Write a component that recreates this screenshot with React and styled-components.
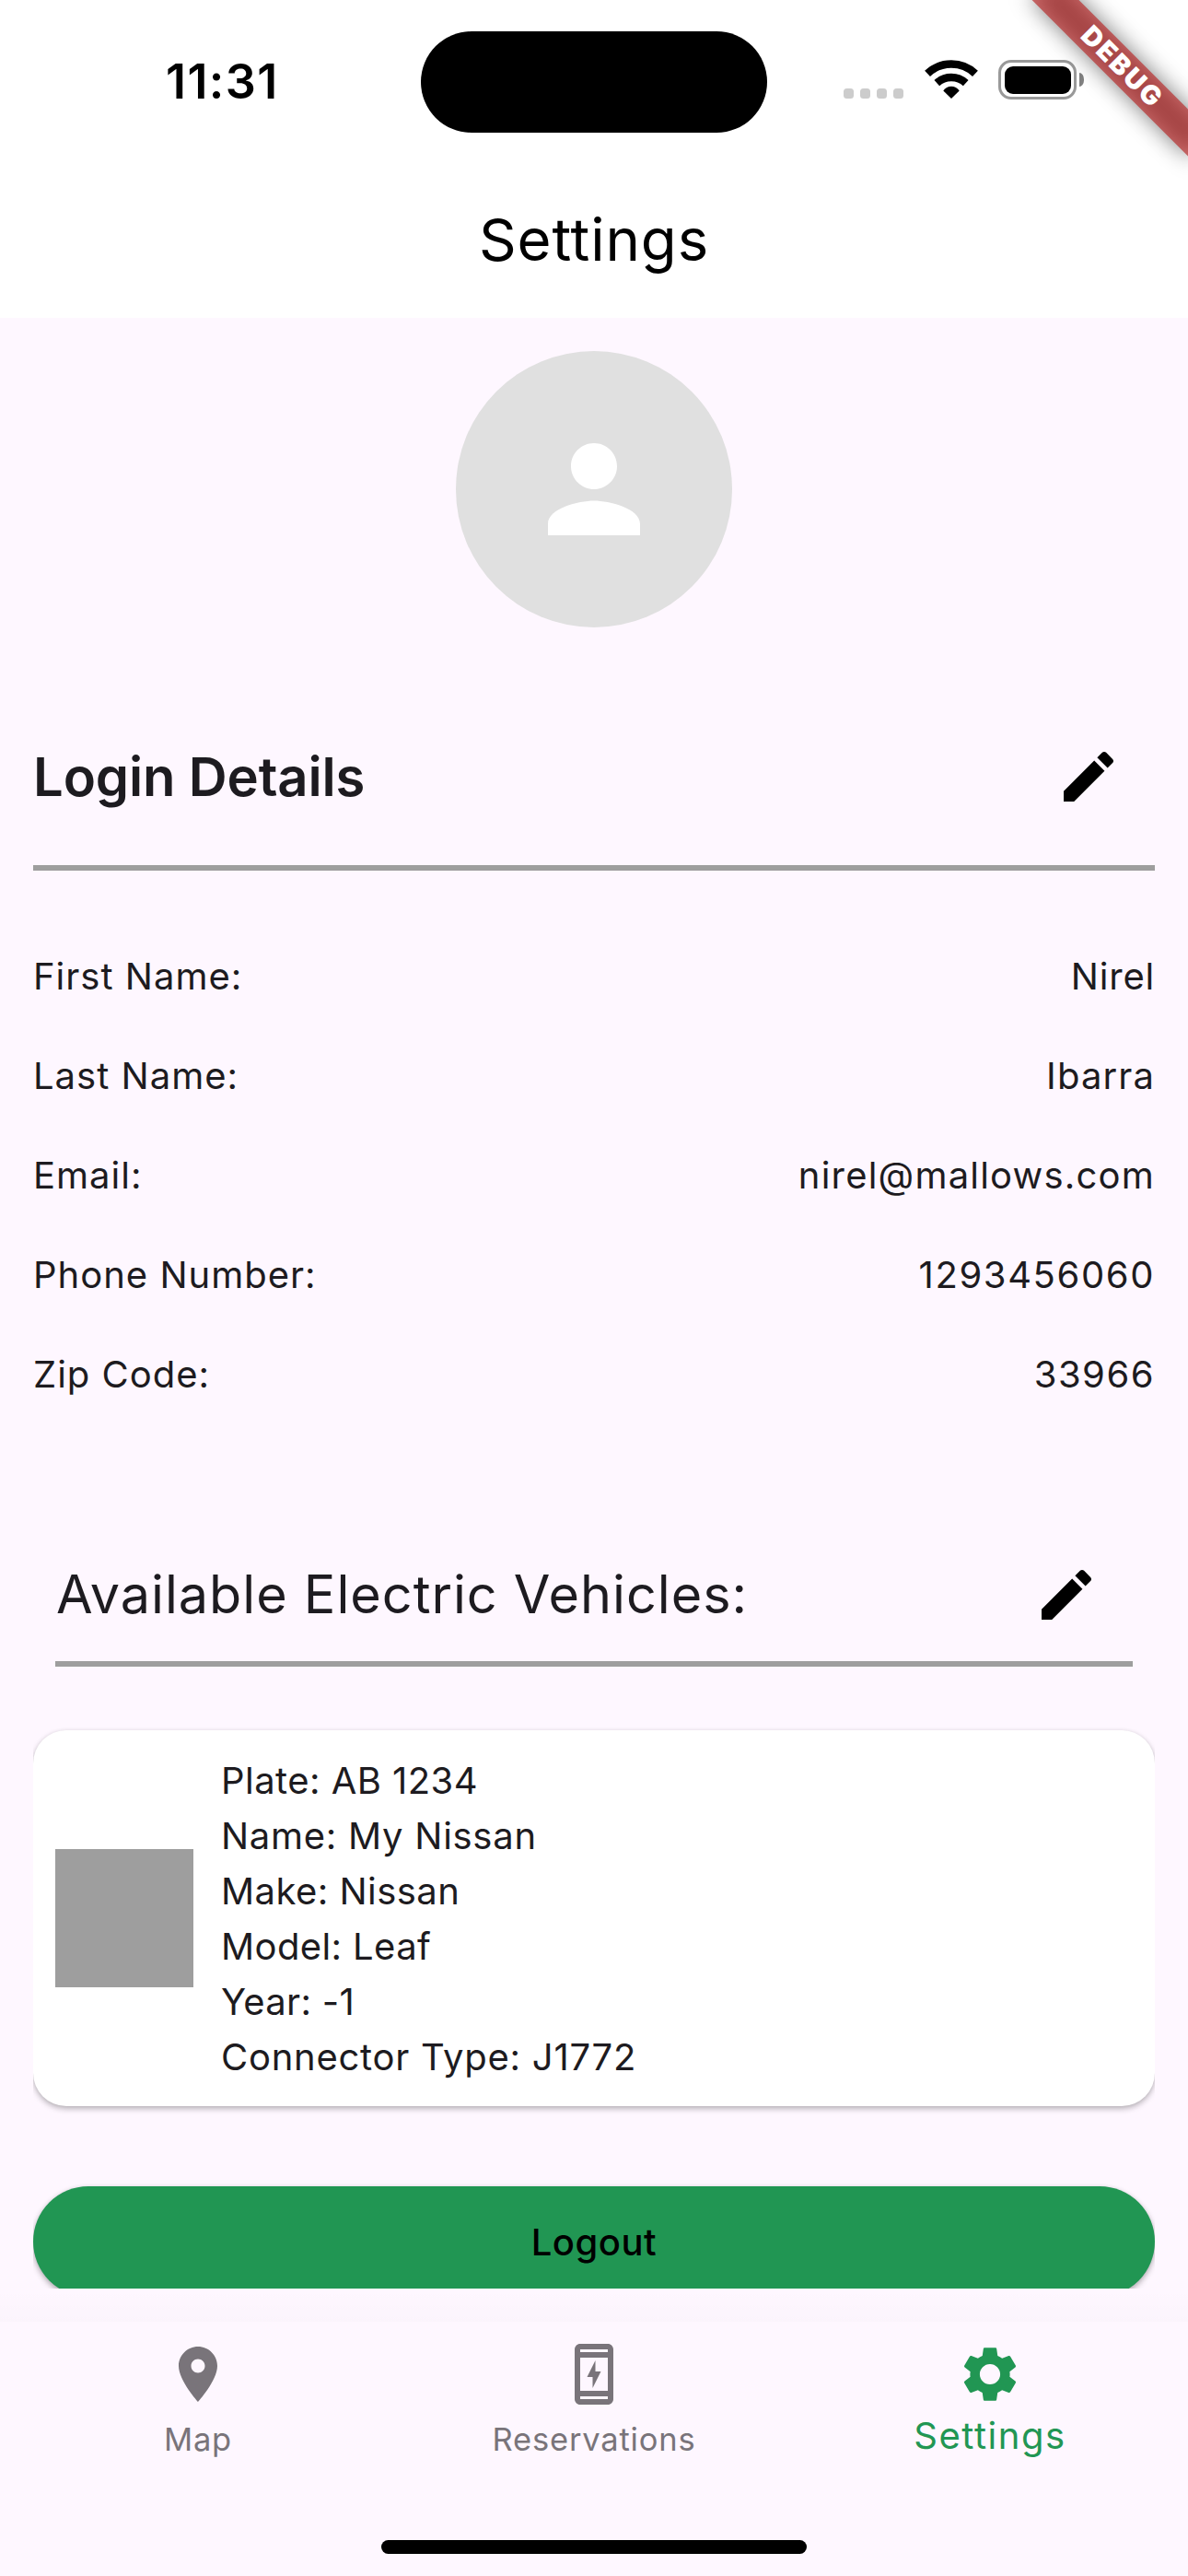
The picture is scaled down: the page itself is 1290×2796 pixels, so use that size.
import React from "react";
import styled, { createGlobalStyle } from "styled-components";

const GlobalStyle = createGlobalStyle`
  *, *::before, *::after { box-sizing: border-box; }
  html, body { margin: 0; padding: 0; overflow: hidden; }
  body {
    font-family: Inter, "Open Sans", sans-serif;
    color: #1d1b20;
    background: #fef7ff;
  }
`;

const Screen = styled.div`
  position: relative;
  display: flex;
  flex-direction: column;
  width: 1290px;
  height: 2796px;
  overflow: hidden;
  background: #fef7ff;
`;

/* ---------- status bar ---------- */

const StatusBar = styled.header`
  display: grid;
  grid-template-columns: 457px 376px 457px;
  height: 177px;
  flex: none;
  background: #fff;
  color: #000;
`;

const Clock = styled.div`
  padding-left: 180px;
  font-size: 52px;
  font-weight: 600;
  line-height: 177px;
  letter-spacing: 1.4px;
`;

const Island = styled.div`
  height: 110px;
  margin-top: 34px;
  border-radius: 55px;
  background: #000;
`;

const StatusIcons = styled.div`
  display: flex;
  justify-content: flex-end;
  height: 43px;
  margin-top: 65px;
  padding-right: 113px;
`;

const SignalDots = styled.div`
  display: flex;
  align-items: flex-end;
  gap: 7px;
  margin-right: 23px;
`;

const Dot = styled.span`
  width: 11px;
  height: 11px;
  margin-bottom: 1px;
  border-radius: 3.5px;
  background: #ccc;
`;

const WifiGlyph = styled.svg`
  width: 58px;
  height: 42px;
  margin-right: 22.5px;
`;

const Battery = styled.div`
  display: flex;
  width: 85px;
  height: 43px;
  padding: 3.5px;
  border: 3.5px solid #999;
  border-radius: 14px;

  &::before {
    content: "";
    flex: 1;
    border-radius: 9px;
    background: #000;
  }
`;

const BatteryTip = styled.div`
  align-self: center;
  width: 5px;
  height: 15px;
  margin-left: 3px;
  border-radius: 0 5px 5px 0 / 0 7px 7px 0;
  background: #808080;
`;

/* ---------- debug ribbon ---------- */

const Ribbon = styled.div`
  position: absolute;
  top: 54px;
  left: 1098px;
  width: 240px;
  height: 36px;
  transform: rotate(45deg);

  &::before {
    content: "";
    position: absolute;
    inset: 0;
    background: rgba(0, 0, 0, 0.5);
    filter: blur(12px);
  }
`;

const RibbonLabel = styled.div`
  position: relative;
  height: 36px;
  padding-left: 2px;
  background: rgba(183, 28, 28, 0.627);
  color: #fff;
  font-size: 29px;
  font-weight: 900;
  line-height: 35px;
  letter-spacing: 2.2px;
  text-align: center;
`;

/* ---------- app bar ---------- */

const AppBar = styled.div`
  display: flex;
  flex: none;
  align-items: center;
  justify-content: center;
  height: 168px;
  padding-bottom: 4px;
  background: #fff;
`;

const Title = styled.h1`
  margin: 0;
  color: #000;
  font-size: 63.5px;
  font-weight: 400;
  letter-spacing: 0.87px;
`;

/* ---------- body ---------- */

const Body = styled.main`
  flex: none;
  height: 2139px;
  padding: 36px 36px 0;
  overflow: hidden;
`;

const Content = styled.div`
  display: flex;
  flex-direction: column;
  overflow-x: clip;
`;

const Avatar = styled.div`
  display: flex;
  align-items: center;
  justify-content: center;
  align-self: center;
  width: 300px;
  height: 300px;
  margin-bottom: 90px;
  border-radius: 50%;
  background: #e0e0e0;
  color: #fff;
`;

const Glyph = styled.svg`
  display: block;
  width: ${(p) => p.$size || 72}px;
  height: ${(p) => p.$size || 72}px;
  fill: currentColor;
`;

const Section = styled.section`
  margin: ${(p) => (p.$inset ? "137px 24px 0" : "0")};
`;

const SectionHead = styled.div`
  display: flex;
  align-items: center;
  justify-content: space-between;
  height: 144px;
  padding-right: 36px;
  color: #000;
`;

const SectionTitle = styled.h2`
  margin: 0;
  padding: ${(p) => (p.$light ? "0 0 3px 1px" : "0")};
  color: #1d1b20;
  font-size: ${(p) => (p.$light ? 57.5 : 58)}px;
  font-weight: ${(p) => (p.$light ? 400 : 600)};
  letter-spacing: ${(p) => (p.$light ? 0.98 : -0.15)}px;
`;

const Rule = styled.hr`
  height: 6px;
  margin: ${(p) => p.$gap || 0}px 0 0;
  border: 0;
  background: #9e9e9e;
`;

const Details = styled.dl`
  display: flex;
  flex-direction: column;
  gap: 48px;
  margin: 85px 0 0;
`;

const DetailRow = styled.div`
  display: flex;
  justify-content: space-between;
  height: 60px;
  font-size: 40px;
  line-height: 60px;
`;

const Label = styled.dt`
  letter-spacing: 1px;
`;

const Value = styled.dd`
  margin: 0;
  letter-spacing: ${(p) => p.$track}px;
`;

const VehicleCard = styled.article`
  display: flex;
  align-items: center;
  gap: 30px;
  height: 408px;
  margin-top: 69px;
  padding: 0 24px;
  border-radius: 36px;
  background: #fff;
  box-shadow: 0 3px 6px rgba(0, 0, 0, 0.27), 0 0 4px rgba(0, 0, 0, 0.05);
`;

const Thumbnail = styled.div`
  width: 150px;
  height: 150px;
  background: #9e9e9e;
`;

const Specs = styled.ul`
  margin: 0;
  padding: 1px 0 0;
  list-style: none;
`;

const Spec = styled.li`
  height: 60px;
  font-size: 40px;
  line-height: 60px;
  letter-spacing: ${(p) => p.$track}px;
`;

const LogoutButton = styled.button`
  height: 120px;
  margin: 87px 0 0;
  padding: 0;
  border: 0;
  border-radius: 60px;
  background: #219653;
  color: #000;
  font-family: inherit;
  font-size: 40px;
  font-weight: 500;
  letter-spacing: 0.52px;
  box-shadow: 0 3px 6px rgba(0, 0, 0, 0.3), 0 0 4px rgba(0, 0, 0, 0.05);
`;

/* ---------- bottom navigation ---------- */

const NavShade = styled.div`
  flex: none;
  height: 36px;
  background: linear-gradient(rgba(0, 0, 0, 0), rgba(0, 0, 0, 0.012));
`;

const NavBar = styled.nav`
  display: grid;
  grid-template-columns: repeat(3, 1fr);
  flex: none;
  height: 237px;
`;

const NavItem = styled.a`
  display: flex;
  flex-direction: column;
  align-items: center;
  padding-top: 21px;
  color: ${(p) => (p.$active ? "#219653" : "#79747a")};
`;

const NavLabel = styled.span`
  margin-top: ${(p) => (p.$active ? 7 : 11)}px;
  font-size: ${(p) => (p.$active ? 40 : 34.5)}px;
  line-height: 48px;
  letter-spacing: ${(p) => (p.$active ? 1.55 : 0.8)}px;
`;

const HomeIndicator = styled.div`
  flex: none;
  align-self: center;
  width: 462px;
  height: 15px;
  border-radius: 8px;
  background: #000;
`;

/* ---------- icon paths, 24-unit grid ---------- */

const icons = {
  person:
    "M12 12c2.21 0 4-1.79 4-4s-1.79-4-4-4-4 1.79-4 4 1.79 4 4 4zm0 2c-2.67 0-8 1.34-8 4v2h16v-2c0-2.66-5.33-4-8-4z",
  edit:
    "M3 17.25V21h3.75L17.81 9.94l-3.75-3.75L3 17.25zM20.71 7.04c.39-.39.39-1.02 0-1.41l-2.34-2.34c-.39-.39-1.02-.39-1.41 0l-1.83 1.83 3.75 3.75 1.83-1.83z",
  pin:
    "M12 2C8.13 2 5 5.13 5 9c0 5.25 7 13 7 13s7-7.75 7-13c0-3.87-3.13-7-7-7zm0 9.5c-1.38 0-2.5-1.12-2.5-2.5s1.12-2.5 2.5-2.5 2.5 1.12 2.5 2.5-1.12 2.5-2.5 2.5z",
  charging:
    "M17 1H7c-1.1 0-2 .9-2 2v18c0 1.1.9 2 2 2h10c1.1 0 2-.9 2-2V3c0-1.1-.9-2-2-2zM7 3h10v1H7V3zm0 3h10v12H7V6zm0 14h10v1H7v-1zM12.5 11V7l-3 6h2v4l3-6h-2z",
  gear:
    "M19.14 12.94c.04-.3.06-.61.06-.94 0-.32-.02-.64-.07-.94l2.03-1.58c.18-.14.23-.41.12-.61l-1.92-3.32c-.12-.22-.37-.29-.59-.22l-2.39.96c-.5-.38-1.03-.7-1.62-.94l-.36-2.54c-.04-.24-.24-.41-.48-.41h-3.84c-.24 0-.43.17-.47.41l-.36 2.54c-.59.24-1.13.57-1.62.94l-2.39-.96c-.22-.08-.47 0-.59.22L2.74 8.87c-.12.21-.08.47.12.61l2.03 1.58c-.05.3-.09.63-.09.94s.02.64.07.94l-2.03 1.58c-.18.14-.23.41-.12.61l1.92 3.32c.12.22.37.29.59.22l2.39-.96c.5.38 1.03.7 1.62.94l.36 2.54c.05.24.24.41.48.41h3.84c.24 0 .44-.17.47-.41l.36-2.54c.59-.24 1.13-.56 1.62-.94l2.39.96c.22.08.47 0 .59-.22l1.92-3.32c.12-.22.07-.47-.12-.61l-2.01-1.58zM12 15.7c-2.04 0-3.7-1.66-3.7-3.7s1.66-3.7 3.7-3.7 3.7 1.66 3.7 3.7-1.66 3.7-3.7 3.7z",
};

const Icon = ({ name, size }) => (
  <Glyph viewBox="0 0 24 24" $size={size} aria-hidden="true">
    <path fillRule="evenodd" d={icons[name]} />
  </Glyph>
);

const Wifi = () => (
  <WifiGlyph viewBox="0 0 58 42" fill="none" stroke="#000" aria-hidden="true">
    <path d="M3.05 14.9A37.7 37.7 0 0 1 54.95 14.9" strokeWidth="8.5" />
    <path d="M13.3 25.1A23.2 23.2 0 0 1 44.7 25.1" strokeWidth="8.4" />
    <path d="M29 42L20.3 33.4A10.5 10.5 0 0 1 37.7 33.4Z" fill="#000" stroke="none" />
  </WifiGlyph>
);

const details = [
  { label: "First Name:", value: "Nirel", track: 0.8 },
  { label: "Last Name:", value: "Ibarra", track: 1.1 },
  { label: "Email:", value: "nirel@mallows.com", track: 1.2 },
  { label: "Phone Number:", value: "1293456060", track: 1.6 },
  { label: "Zip Code:", value: "33966", track: 1.5 },
];

const specs = [
  { text: "Plate: AB 1234", track: 0.45 },
  { text: "Name: My Nissan", track: 0.72 },
  { text: "Make: Nissan", track: 0.45 },
  { text: "Model: Leaf", track: 0.38 },
  { text: "Year: -1", track: 0.29 },
  { text: "Connector Type: J1772", track: 0.74 },
];

const tabs = [
  { icon: "pin", label: "Map" },
  { icon: "charging", label: "Reservations" },
  { icon: "gear", label: "Settings", active: true },
];

export default function App() {
  return (
    <>
      <GlobalStyle />
      <Screen>
        <StatusBar>
          <Clock>11:31</Clock>
          <Island />
          <StatusIcons>
            <SignalDots>
              <Dot />
              <Dot />
              <Dot />
              <Dot />
            </SignalDots>
            <Wifi />
            <Battery />
            <BatteryTip />
          </StatusIcons>
        </StatusBar>

        <AppBar>
          <Title>Settings</Title>
        </AppBar>

        <Body>
          <Content>
            <Avatar>
              <Icon name="person" size={150} />
            </Avatar>

            <Section>
              <SectionHead>
                <SectionTitle>Login Details</SectionTitle>
                <Icon name="edit" />
              </SectionHead>
              <Rule $gap={24} />
              <Details>
                {details.map((d) => (
                  <DetailRow key={d.label}>
                    <Label>{d.label}</Label>
                    <Value $track={d.track}>{d.value}</Value>
                  </DetailRow>
                ))}
              </Details>
            </Section>

            <Section $inset>
              <SectionHead>
                <SectionTitle $light>Available Electric Vehicles:</SectionTitle>
                <Icon name="edit" />
              </SectionHead>
              <Rule />
            </Section>

            <VehicleCard>
              <Thumbnail />
              <Specs>
                {specs.map((s) => (
                  <Spec key={s.text} $track={s.track}>
                    {s.text}
                  </Spec>
                ))}
              </Specs>
            </VehicleCard>

            <LogoutButton>Logout</LogoutButton>
          </Content>
        </Body>

        <NavShade />
        <NavBar>
          {tabs.map((t) => (
            <NavItem key={t.label} $active={t.active}>
              <Icon name={t.icon} />
              <NavLabel $active={t.active}>{t.label}</NavLabel>
            </NavItem>
          ))}
        </NavBar>
        <HomeIndicator />

        <Ribbon>
          <RibbonLabel>DEBUG</RibbonLabel>
        </Ribbon>
      </Screen>
    </>
  );
}
